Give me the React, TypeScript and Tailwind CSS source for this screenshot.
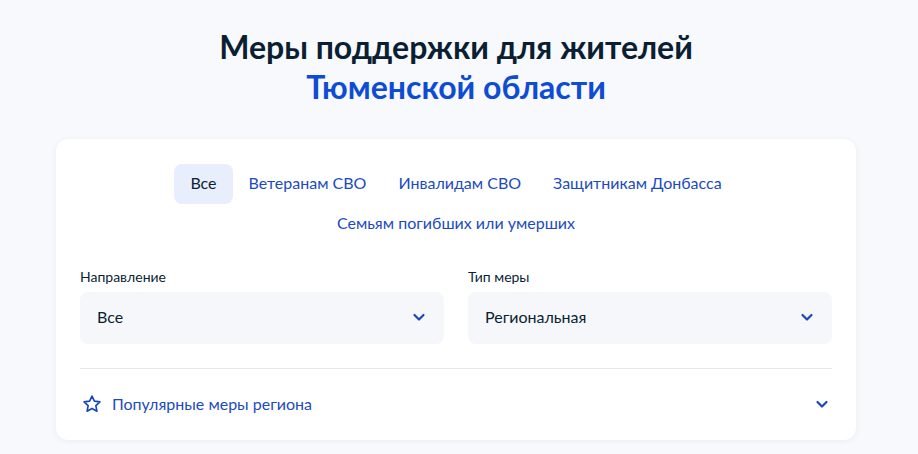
const tabs = ['Все', 'Ветеранам СВО', 'Инвалидам СВО', 'Защитникам Донбасса', 'Семьям погибших или умерших']

function Chevron() {
  return (
    <svg width="14" height="9" viewBox="0 0 14 9" fill="none">
      <path d="M2.5 2l4.5 4.5 4.5-4.5" stroke="#1848b8" strokeWidth="2.2" strokeLinecap="round" strokeLinejoin="round" />
    </svg>
  )
}

function Select({ label, value }: { label: string; value: string }) {
  return (
    <div className="flex-1">
      <p className="text-[14px] leading-5 text-[#0b1f33] mb-[5px]">{label}</p>
      <div className="h-[52px] rounded-lg bg-[#f5f7fa] flex items-center justify-between pl-[17px] pr-[18px] pb-[2px]">
        <span className="text-[16px] text-[#0b1f33]">{value}</span>
        <Chevron />
      </div>
    </div>
  )
}

export default function App() {
  return (
    <div className="min-h-screen bg-[#f7f9fd] pt-[27px] font-['Lato','Noto_Sans',sans-serif]">
      {/* content column is 912 wide, page has a scrollbar gutter on the right */}
      <div className="w-[912px]">
        <h1 className="text-center text-[32px] leading-10 font-bold text-[#0b1f33]">
          Меры поддержки для жителей
          <br />
          <span className="text-[#0d4cd3]">Тюменской области</span>
        </h1>

        <div className="w-[800px] mx-auto mt-8 bg-white rounded-xl shadow-[0_1px_6px_rgba(11,31,51,0.06)] px-6 pt-[25px] pb-6">
          <div className="flex flex-wrap justify-center px-[92px]">
            {tabs.map((t, i) => (
              <button
                key={t}
                className={
                  i === 0
                    ? 'h-10 px-4 pb-[2px] rounded-lg bg-[#e8eefb] text-[16px] text-[#0b1f33]'
                    : 'h-10 px-4 pb-[2px] rounded-lg text-[16px] text-[#1b4bbf]'
                }
              >
                {t}
              </button>
            ))}
          </div>

          <div className="flex gap-6 mt-[23px]">
            <Select label="Направление" value="Все" />
            <Select label="Тип меры" value="Региональная" />
          </div>

          <div className="border-t border-[#e3e8ee] mt-6 pt-6">
            <div className="h-6 flex items-center justify-between -mt-px">
              <div className="flex items-center gap-[10px] pl-[2px]">
                <svg width="20" height="20" viewBox="0 0 24 24" fill="none">
                  <path
                    d="M12 2.5l2.9 6.1 6.6.8-4.9 4.6 1.3 6.6L12 17.3l-5.9 3.3 1.3-6.6-4.9-4.6 6.6-.8z"
                    stroke="#1848b8"
                    strokeWidth="2"
                    strokeLinejoin="round"
                  />
                </svg>
                <span className="text-[16px] text-[#1b4bbf]">Популярные меры региона</span>
              </div>
              <div className="pr-[3px]">
                <Chevron />
              </div>
            </div>
          </div>
        </div>
      </div>
    </div>
  )
}
